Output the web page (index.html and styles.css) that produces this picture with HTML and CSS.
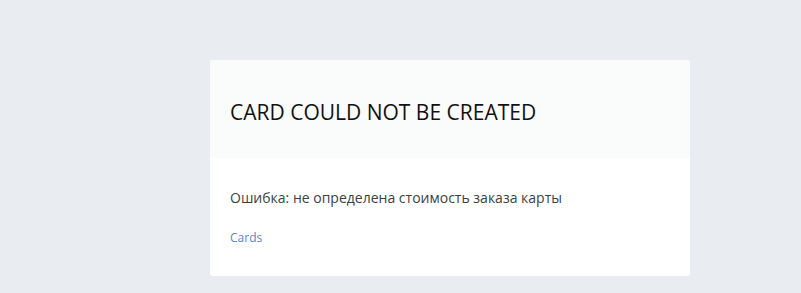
FILE: index.html
```html
<!DOCTYPE html>
<html>
<head>
<meta charset="utf-8">
<link rel="stylesheet" href="styles.css">
</head>
<body>
<div class="page">
  <div class="card">
    <div class="card-header">
      <h1 class="card-title">CARD COULD NOT BE CREATED</h1>
    </div>
    <div class="card-body">
      <p class="message">Ошибка: не определена стоимость заказа карты</p>
      <a class="link" href="#">Cards</a>
    </div>
  </div>
</div>
</body>
</html>
```
FILE: styles.css
```css
html, body {
  margin: 0;
  padding: 0;
  background: #e9edf1;
  font-family: "Open Sans", "Noto Sans", sans-serif;
}
.page {
  padding: 60px 0 0 210px;
}
.card {
  width: 480px;
  background: #ffffff;
  border-radius: 3px;
  overflow: hidden;
}
.card-header {
  background: #fafbfb;
  height: 98px;
  padding: 0 20px;
  display: flex;
  align-items: center;
  box-sizing: border-box;
}
.card-title {
  margin: 5px 0 0 0;
  font-size: 21px;
  font-weight: 400;
  line-height: 28px;
  color: #111111;
}
.card-body {
  padding: 30px 20px 28px 20px;
}
.message {
  margin: 0 0 20px 0;
  font-size: 14px;
  line-height: 20px;
  color: #3a3f44;
}
.link {
  display: block;
  font-size: 12px;
  line-height: 20px;
  color: #5b84c4;
  text-decoration: none;
}
```
